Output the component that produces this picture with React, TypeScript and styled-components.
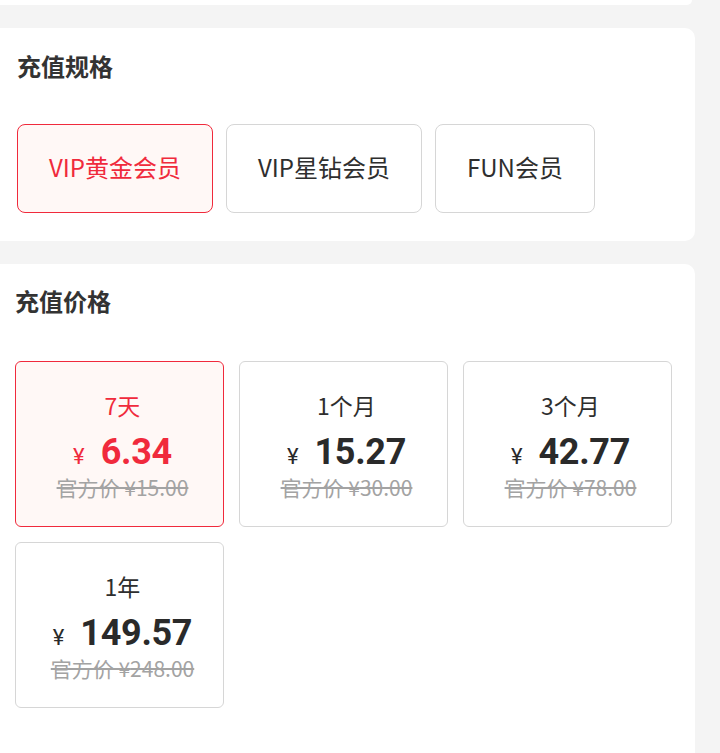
import React, { useState } from "react";
import styled, { createGlobalStyle, css } from "styled-components";

const GlobalStyle = createGlobalStyle`
  html, body {
    margin: 0;
    padding: 0;
    background: #f4f4f4;
    font-family: "Noto Sans CJK SC", "Noto Sans", sans-serif;
    color: #333;
    overflow: hidden;
  }
`;

const RED = "#f02a3c";

const Page = styled.div`
  display: flex;
  flex-direction: column;
  gap: 23px;
  width: 707px;
  margin-left: -12px;
`;

const Card = styled.section<{ $stub?: boolean }>`
  background: #fff;
  border-radius: 10px;
  ${(p) =>
    p.$stub
      ? css`
          height: 5px;
          width: 704px;
          border-radius: 0 0 10px 10px;
        `
      : css`
          padding: 25px 24px 28px 29px;
        `}
`;

const PriceSection = styled(Card)`
  padding: 24px 24px 60px 27px;
`;

const Title = styled.h2`
  margin: 0;
  font-size: 24px;
  line-height: 26px;
  font-weight: 700;
  color: #333;
`;

const SpecRow = styled.div`
  display: flex;
  gap: 13px;
  margin-top: 45px;
`;

const SpecButton = styled.button<{ $active: boolean }>`
  box-sizing: border-box;
  height: 89px;
  padding: 0 31px 5px;
  border-radius: 8px;
  font-family: "Noto Sans CJK SC", sans-serif;
  font-size: 24px;
  font-weight: 400;
  cursor: pointer;
  border: 1.5px solid ${(p) => (p.$active ? RED : "#d6d6d6")};
  background: ${(p) => (p.$active ? "#fff8f6" : "#fff")};
  color: ${(p) => (p.$active ? RED : "#2e2e2e")};
`;

const PriceGrid = styled.div`
  display: grid;
  grid-template-columns: repeat(3, 209px);
  column-gap: 15px;
  row-gap: 15px;
  margin-top: 47px;
`;

const PriceCard = styled.div<{ $active: boolean }>`
  box-sizing: border-box;
  height: 166px;
  padding-left: 6px;
  border-radius: 6px;
  border: 1.5px solid ${(p) => (p.$active ? RED : "#d6d6d6")};
  background: ${(p) => (p.$active ? "#fff8f6" : "#fff")};
  display: flex;
  flex-direction: column;
  align-items: center;
  justify-content: center;
  cursor: pointer;
`;

const Label = styled.div<{ $active: boolean }>`
  font-size: 23px;
  line-height: 30px;
  color: ${(p) => (p.$active ? RED : "#2e2e2e")};
`;

const PriceLine = styled.div<{ $active: boolean }>`
  display: flex;
  align-items: baseline;
  margin-top: 12px;
  height: 40px;
  line-height: 40px;
  color: ${(p) => (p.$active ? RED : "#2a2a2a")};
  font-family: Roboto, "Liberation Sans", sans-serif;
`;

const Yen = styled.span`
  font-size: 22px;
  font-weight: 400;
  margin-right: 16px;
`;

const Amount = styled.span`
  font-size: 36px;
  font-weight: 700;
  letter-spacing: -0.3px;
`;

const Original = styled.div`
  margin-top: 3px;
  font-size: 21px;
  line-height: 24px;
  color: #a3a3a3;
  text-decoration: line-through;
  text-decoration-thickness: 1.5px;
`;

const specs = ["VIP黄金会员", "VIP星钻会员", "FUN会员"];

const prices = [
  { label: "7天", price: "6.34", original: "15.00" },
  { label: "1个月", price: "15.27", original: "30.00" },
  { label: "3个月", price: "42.77", original: "78.00" },
  { label: "1年", price: "149.57", original: "248.00" },
];

export default function App() {
  const [spec, setSpec] = useState(0);
  const [price, setPrice] = useState(0);
  return (
    <>
      <GlobalStyle />
      <Page>
        <Card $stub />
        <Card>
          <Title>充值规格</Title>
          <SpecRow>
            {specs.map((s, i) => (
              <SpecButton key={s} $active={spec === i} onClick={() => setSpec(i)}>
                {s}
              </SpecButton>
            ))}
          </SpecRow>
        </Card>
        <PriceSection>
          <Title>充值价格</Title>
          <PriceGrid>
            {prices.map((p, i) => (
              <PriceCard key={p.label} $active={price === i} onClick={() => setPrice(i)}>
                <Label $active={price === i}>{p.label}</Label>
                <PriceLine $active={price === i}>
                  <Yen>¥</Yen>
                  <Amount>{p.price}</Amount>
                </PriceLine>
                <Original>官方价 ¥{p.original}</Original>
              </PriceCard>
            ))}
          </PriceGrid>
        </PriceSection>
      </Page>
    </>
  );
}
